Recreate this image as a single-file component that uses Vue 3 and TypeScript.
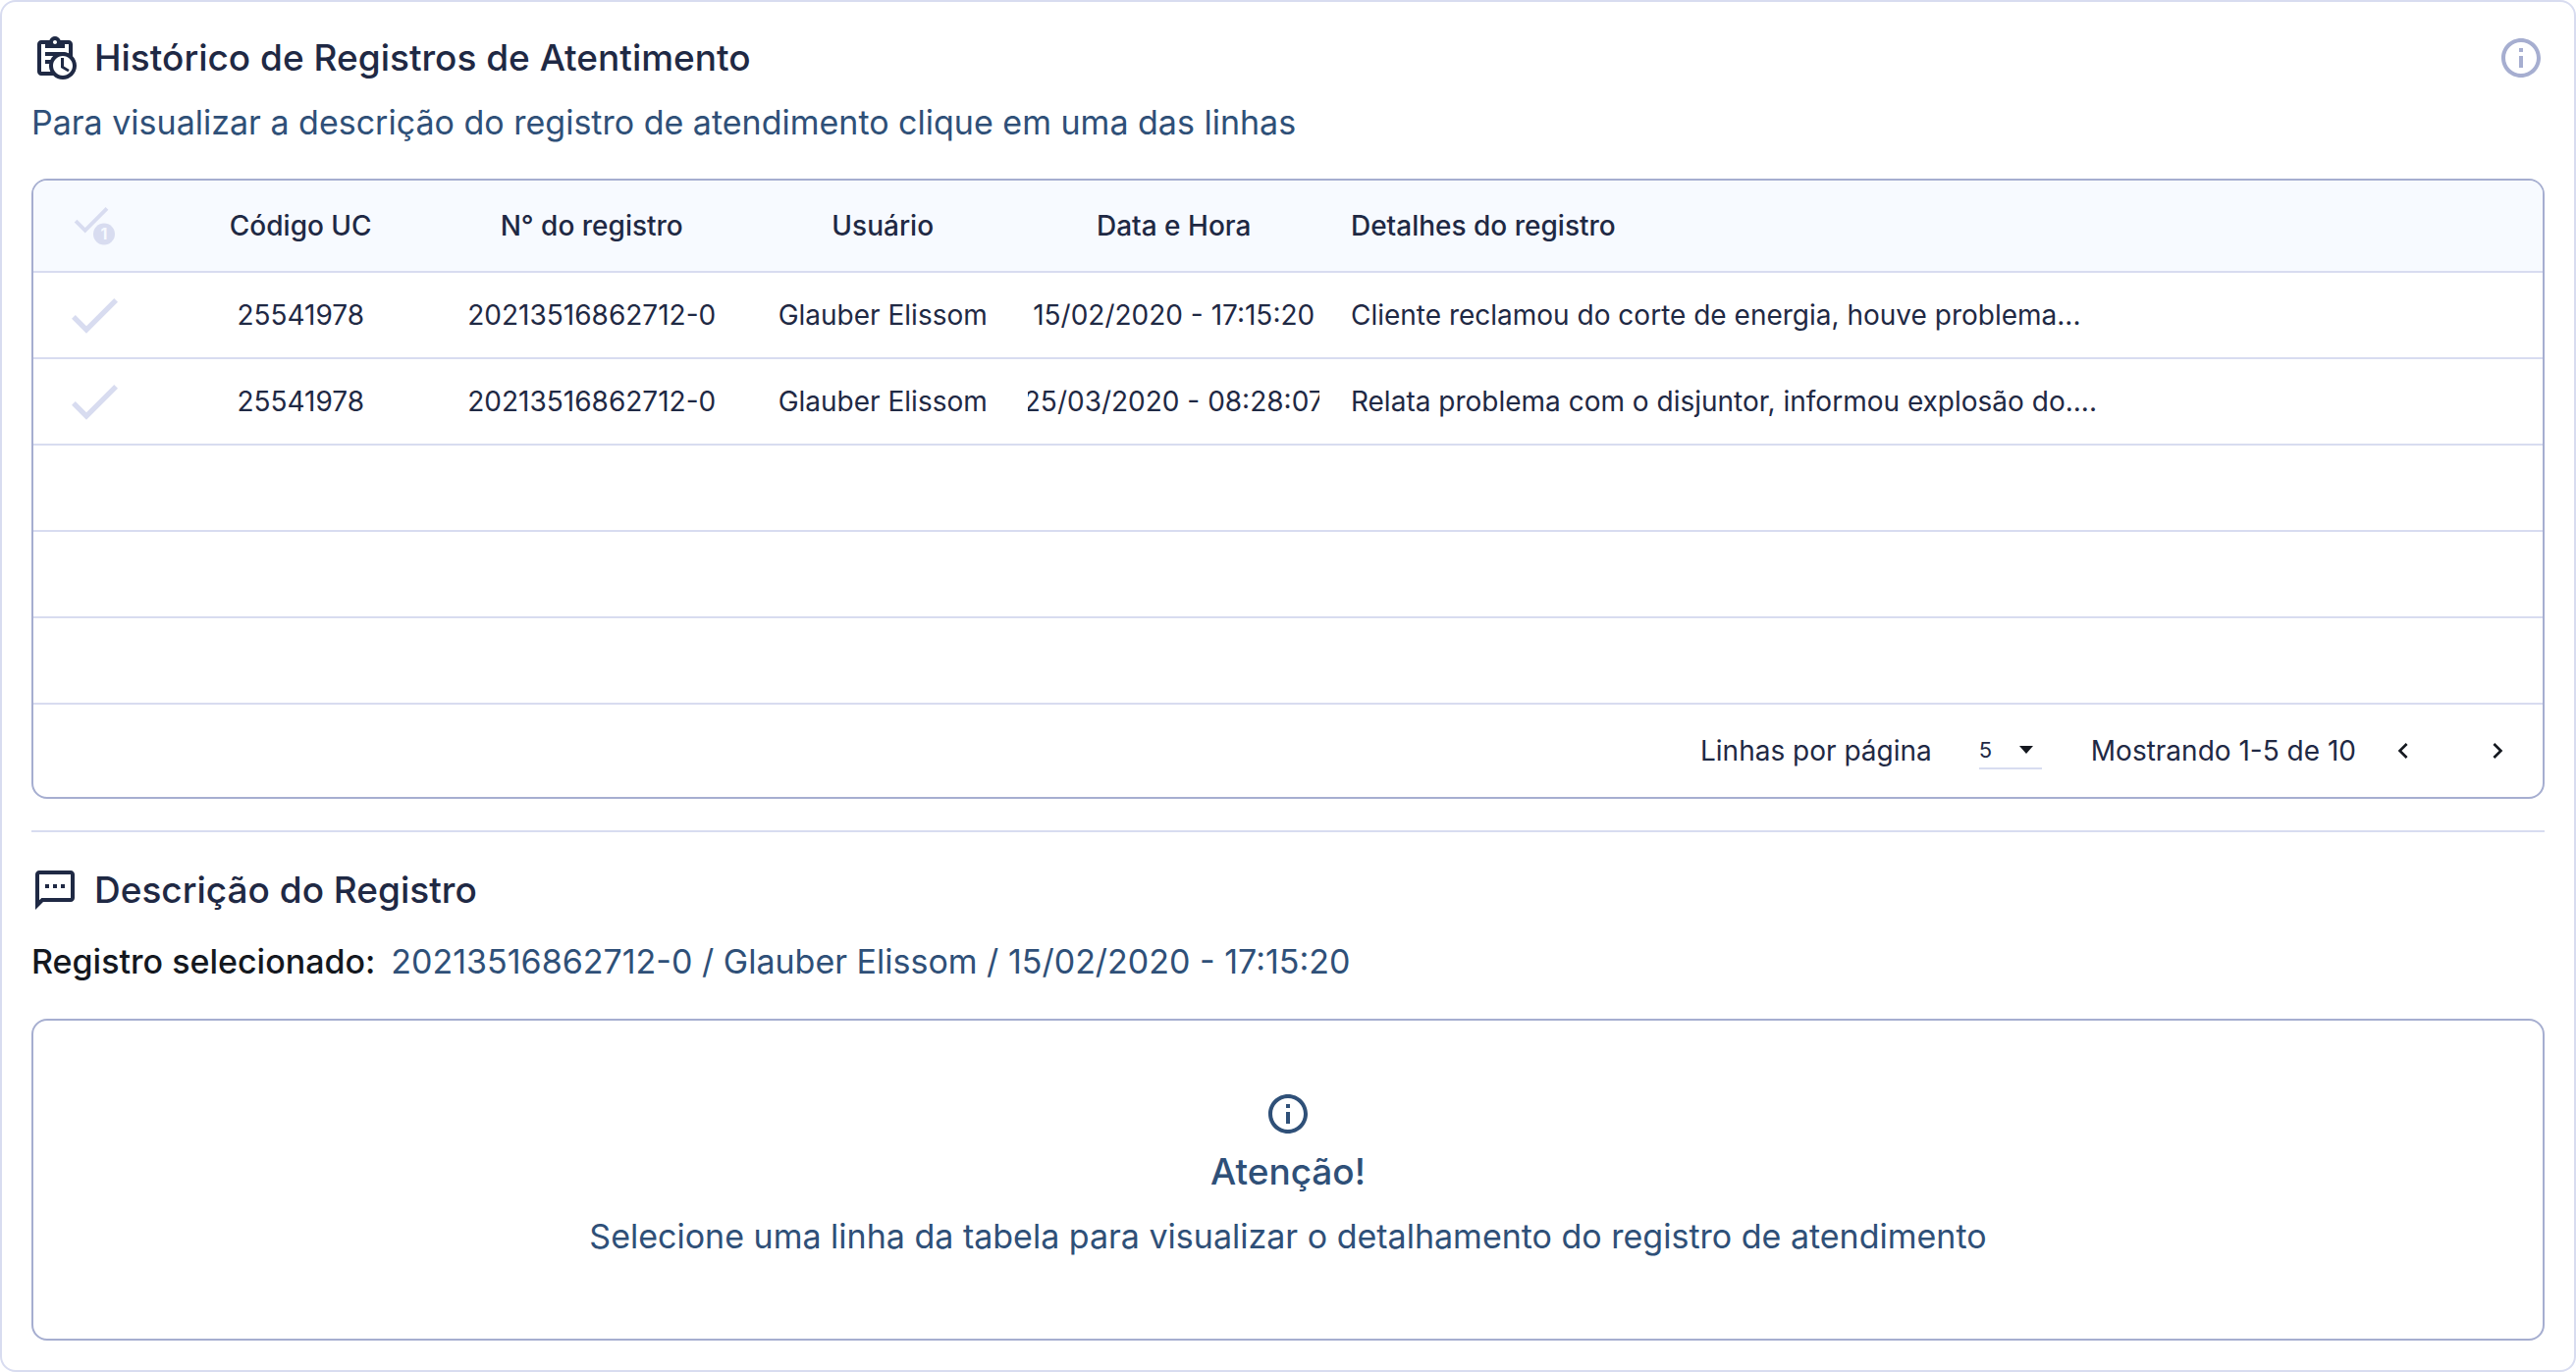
<script setup lang="ts">
import { ref } from 'vue'

interface Registro {
  uc: string
  numero: string
  usuario: string
  data: string
  detalhes: string
}

const registros: Registro[] = [
  {
    uc: '25541978',
    numero: '20213516862712-0',
    usuario: 'Glauber Elissom',
    data: '15/02/2020 - 17:15:20',
    detalhes: 'Cliente reclamou do corte de energia, houve problema...',
  },
  {
    uc: '25541978',
    numero: '20213516862712-0',
    usuario: 'Glauber Elissom',
    data: '25/03/2020 - 08:28:07',
    detalhes: 'Relata problema com o disjuntor, informou explosão do....',
  },
]

const linhasPorPagina = ref(5)
const selecionado = ref<Registro>(registros[0])
</script>

<template>
  <main class="card">
    <header class="heading">
      <svg class="icon" viewBox="0 0 24 24" aria-hidden="true">
        <path d="M21 11.11V5C21 3.9 20.11 3 19 3H14.82C14.4 1.84 13.3 1 12 1S9.6 1.84 9.18 3H5C3.9 3 3 3.9 3 5V19C3 20.11 3.9 21 5 21H11.11C12.37 22.24 14.09 23 16 23C19.87 23 23 19.87 23 16C23 14.09 22.24 12.37 21 11.11M12 3C12.55 3 13 3.45 13 4S12.55 5 12 5 11 4.55 11 4 11.45 3 12 3M5 19V5H7V7H17V5H19V9.68C18.09 9.25 17.08 9 16 9H7V11H11.1C10.5 11.57 10.04 12.25 9.68 13H7V15H9.08C9.03 15.33 9 15.66 9 16C9 17.08 9.25 18.09 9.68 19H5M16 21C13.24 21 11 18.76 11 16C11 13.24 13.24 11 16 11C18.76 11 21 13.24 21 16C21 18.76 18.76 21 16 21M16.5 16.25L19.36 17.94L18.61 19.16L15 17V12H16.5V16.25Z" />
      </svg>
      <h1 class="title">Histórico de Registros de Atentimento</h1>
      <button class="info" type="button" aria-label="Informações">
        <svg class="icon" viewBox="0 0 24 24" aria-hidden="true">
          <path d="M11 7h2v2h-2zm0 4h2v6h-2zm1-9C6.48 2 2 6.48 2 12s4.48 10 10 10 10-4.480 10-10S17.520 2 12 2zm0 18c-4.410 0-8-3.590-8-8s3.590-8 8-8 8 3.590 8 8-3.590 8-8 8z" />
        </svg>
      </button>
    </header>
    <p class="hint">Para visualizar a descrição do registro de atendimento clique em uma das linhas</p>

    <section class="panel">
      <table class="grid">
        <colgroup>
          <col class="col-check">
          <col class="col-data">
          <col class="col-data">
          <col class="col-data">
          <col class="col-data">
          <col>
        </colgroup>
        <thead>
          <tr>
            <th scope="col" aria-label="Selecionar um">
              <svg class="pick-one" viewBox="0 0 56 56" aria-hidden="true">
                <path transform="translate(1 -2) scale(1.97)" d="M9 16.200L4.800 12l-1.400 1.400L9 19 21 7l-1.400-1.400L9 16.200z" />
                <circle cx="38" cy="36.500" r="11" />
                <text x="38" y="42" text-anchor="middle">1</text>
              </svg>
            </th>
            <th scope="col">Código UC</th>
            <th scope="col">N° do registro</th>
            <th scope="col">Usuário</th>
            <th scope="col">Data e Hora</th>
            <th scope="col" class="details">Detalhes do registro</th>
          </tr>
        </thead>
        <tbody>
          <tr v-for="(r, i) in registros" :key="i" @click="selecionado = r">
            <td>
              <button class="check" type="button" :aria-label="'Selecionar registro de ' + r.data">
                <svg viewBox="0 0 24 24" aria-hidden="true">
                  <path d="M9 16.200L4.800 12l-1.400 1.400L9 19 21 7l-1.400-1.400L9 16.200z" />
                </svg>
              </button>
            </td>
            <td>{{ r.uc }}</td>
            <td>{{ r.numero }}</td>
            <td>{{ r.usuario }}</td>
            <td><div class="clip">{{ r.data }}</div></td>
            <td class="details">{{ r.detalhes }}</td>
          </tr>
          <tr v-for="n in linhasPorPagina - registros.length" :key="'vazia' + n">
            <td colspan="6"></td>
          </tr>
        </tbody>
      </table>

      <footer class="pager">
        <label for="linhas">Linhas por página</label>
        <div class="select">
          <select id="linhas" v-model="linhasPorPagina">
            <option :value="5">5</option>
            <option :value="10">10</option>
          </select>
          <svg viewBox="0 0 14 8" aria-hidden="true"><path d="M0 0h14L7 8z" /></svg>
        </div>
        <span class="range">Mostrando 1-5 de 10</span>
        <button class="step" type="button" aria-label="Página anterior">
          <svg viewBox="0 0 24 24" aria-hidden="true"><path d="M15.410 7.410L14 6l-6 6 6 6 1.410-1.410L10.830 12z" /></svg>
        </button>
        <button class="step next" type="button" aria-label="Próxima página">
          <svg viewBox="0 0 24 24" aria-hidden="true"><path d="M10 6L8.590 7.410 13.170 12l-4.580 4.590L10 18l6-6z" /></svg>
        </button>
      </footer>
    </section>

    <hr class="divider">

    <div class="heading">
      <svg class="icon" viewBox="0 0 24 24" aria-hidden="true">
        <path d="M20 2H4c-1.100 0-2 .9-2 2v18l4-4h14c1.100 0 2-.9 2-2V4c0-1.100-.9-2-2-2zm0 14H5.170L4 17.170V4h16v12zM7 9h2v2H7zm4 0h2v2h-2zm4 0h2v2h-2z" />
      </svg>
      <h2 class="title">Descrição do Registro</h2>
    </div>
    <p class="selected">
      <strong>Registro selecionado:</strong>
      <span>{{ selecionado.numero }} / {{ selecionado.usuario }} / {{ selecionado.data }}</span>
    </p>

    <section class="notice">
      <svg class="icon" viewBox="0 0 24 24" aria-hidden="true">
        <path d="M11 7h2v2h-2zm0 4h2v6h-2zm1-9C6.480 2 2 6.480 2 12s4.480 10 10 10 10-4.480 10-10S17.520 2 12 2zm0 18c-4.410 0-8-3.590-8-8s3.590-8 8-8 8 3.590 8 8-3.590 8-8 8z" />
      </svg>
      <h3>Atenção!</h3>
      <p>Selecione uma linha da tabela para visualizar o detalhamento do registro de atendimento</p>
    </section>
  </main>
</template>

<style>
body {
  margin: 0;
  background: #fff;
}
</style>

<style scoped>
.card {
  --ink: #1f2944;
  --blue: #2f5078;
  --line: #d8dcf0;
  --edge: #a6aed0;
  box-sizing: border-box;
  padding: 33px 30px 30px;
  border: 2px solid var(--line);
  border-radius: 16px;
  background: #fff;
  color: var(--ink);
  font-family: Inter, "Liberation Sans", sans-serif;
  font-size: 28px;
}

h1,
h2,
h3,
p {
  margin: 0;
}

button {
  display: flex;
  align-items: center;
  justify-content: center;
  padding: 0;
  border: 0;
  background: none;
  color: inherit;
  cursor: pointer;
}

svg {
  display: block;
  flex: none;
  fill: currentColor;
}

.icon {
  width: 48px;
  height: 48px;
}

.heading {
  display: flex;
  align-items: center;
  gap: 16px;
}

.title {
  font-size: 37px;
  font-weight: 500;
  line-height: 48px;
}

.info {
  margin-left: auto;
  color: var(--edge);
}

.hint {
  margin: 18px 0 33px;
  color: var(--blue);
  font-size: 34px;
  line-height: 48px;
}

.panel {
  overflow: hidden;
  border: 2px solid var(--edge);
  border-radius: 16px;
}

.grid {
  width: 100%;
  border-collapse: separate;
  border-spacing: 0;
  table-layout: fixed;
}

.col-check {
  width: 124px;
}

.col-data {
  width: 11.6%;
}

th,
td {
  box-sizing: border-box;
  height: 88px;
  padding: 0;
  border-bottom: 2px solid var(--line);
  font-weight: 400;
  text-align: center;
  white-space: nowrap;
}

th {
  height: 94px;
  background: #f7faff;
  font-weight: 500;
}

.details {
  padding-left: 32px;
  text-align: left;
}

tbody tr {
  cursor: pointer;
}

.clip {
  display: flex;
  justify-content: center;
  overflow: hidden;
}

.pick-one {
  width: 56px;
  height: 56px;
  margin: 0 auto;
  color: var(--line);
}

.pick-one text {
  fill: #f7faff;
  font-size: 16px;
  font-weight: 700;
}

.check {
  margin: 0 auto;
  color: var(--line);
}

.check svg {
  width: 64px;
  height: 64px;
}

.pager {
  display: flex;
  align-items: center;
  justify-content: flex-end;
  height: 94px;
  padding-right: 22px;
}

.select {
  display: grid;
  align-items: center;
  width: 64px;
  margin: 0 50px 0 48px;
  border-bottom: 2px solid var(--line);
}

.select select,
.select svg {
  grid-area: 1 / 1;
}

.select select {
  width: 100%;
  height: 36px;
  padding: 0;
  border: 0;
  appearance: none;
  background: none;
  color: inherit;
  font-family: inherit;
  font-size: 22px;
}

.select svg {
  justify-self: end;
  width: 14px;
  height: 8px;
  margin-right: 9px;
  color: #14181f;
  pointer-events: none;
}

.step {
  width: 48px;
  height: 48px;
  margin-left: 24px;
  color: #14181f;
}

.step svg {
  width: 32px;
  height: 32px;
}

.next {
  margin-left: 48px;
}

.divider {
  height: 2px;
  margin: 32px 0 35px;
  border: 0;
  background: var(--line);
}

.selected {
  display: flex;
  gap: 16px;
  margin: 25px 0 34px;
  color: var(--blue);
  font-size: 34px;
  line-height: 48px;
}

.selected strong {
  color: #14181f;
  font-weight: 500;
}

.notice {
  display: flex;
  flex-direction: column;
  align-items: center;
  padding: 71px 32px 84px;
  border: 2px solid var(--edge);
  border-radius: 16px;
  color: var(--blue);
}

.notice h3 {
  margin: 15px 0 26px;
  font-size: 37px;
  font-weight: 500;
  line-height: 40px;
}

.notice p {
  font-size: 34px;
  line-height: 40px;
}
</style>
